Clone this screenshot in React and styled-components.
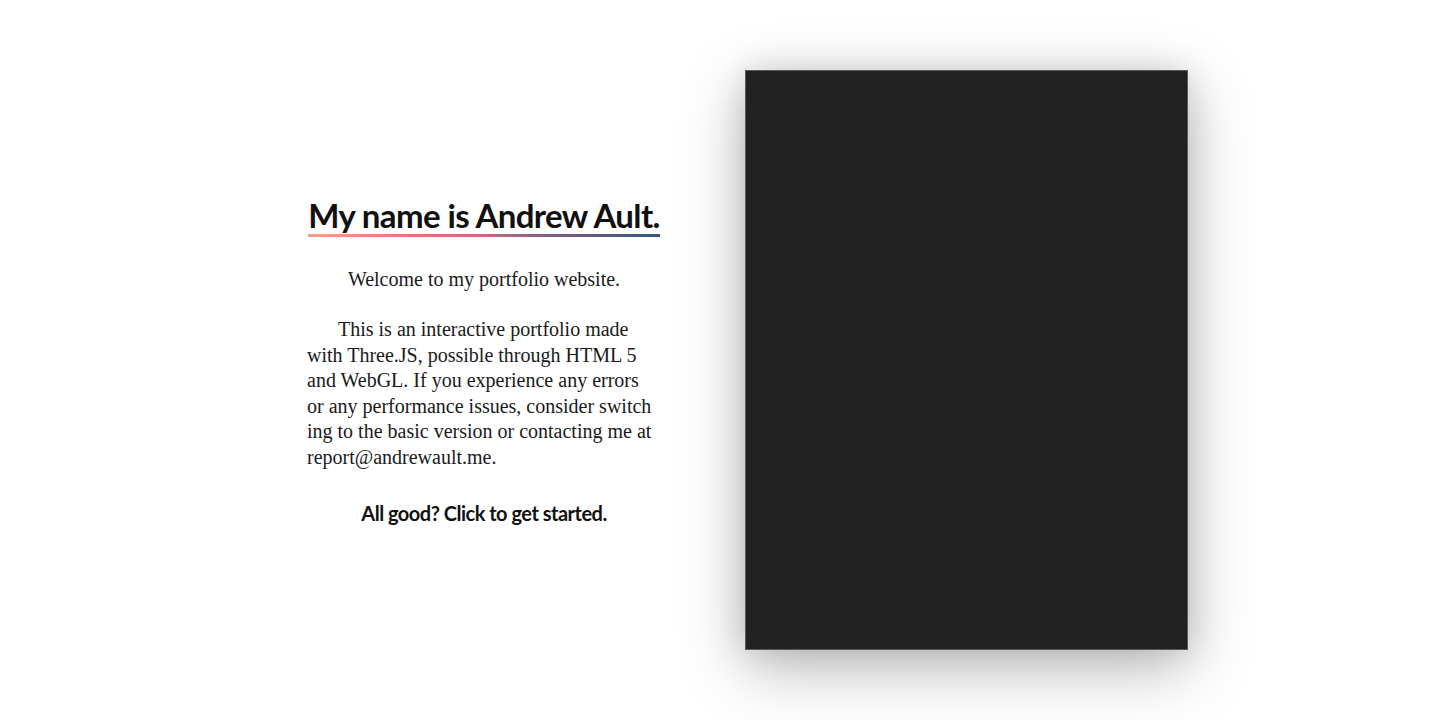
import React from "react";
import styled, { createGlobalStyle } from "styled-components";

const Global = createGlobalStyle`
  html, body {
    margin: 0;
    padding: 0;
    background: #ffffff;
  }
`;

const Page = styled.main`
  display: flex;
  align-items: center;
  height: 720px;
  padding-left: 307px;
  gap: 84px;
  box-sizing: border-box;
`;

const Intro = styled.section`
  width: 354px;
  display: flex;
  flex-direction: column;
  align-items: center;
  color: #111;
`;

const Title = styled.h1`
  margin: 0;
  font-family: "Lato", "Open Sans", sans-serif;
  font-weight: 700;
  font-size: 33px;
  letter-spacing: -0.6px;
  line-height: 40px;
  white-space: nowrap;
  padding-bottom: 2px;
  background-image: linear-gradient(90deg, #f2a584 0%, #e8707c 30%, #c86a80 50%, #7a5a80 72%, #2f5a85 100%);
  background-repeat: no-repeat;
  background-size: 100% 3px;
  background-position: 0 100%;
`;

const Body = styled.div`
  margin-top: 30px;
  width: 100%;
  font-family: "Liberation Serif", "DejaVu Serif", serif;
  font-size: 20px;
  line-height: 25.5px;
  color: #1a1a1a;
`;

const Para = styled.p`
  margin: 0 0 25px;
  text-align: ${(p) => (p.$center ? "center" : "left")};
  text-indent: ${(p) => (p.$indent ? "31px" : "0")};
  white-space: ${(p) => (p.$lines ? "pre-line" : "normal")};
`;

const Start = styled.button`
  margin-top: 6px;
  border: 0;
  background: none;
  padding: 0;
  cursor: pointer;
  font-family: "Lato", "Open Sans", sans-serif;
  font-weight: 700;
  font-size: 20px;
  letter-spacing: -0.5px;
  color: #111;
`;

const Stage = styled.div`
  width: 443px;
  height: 580px;
  background: #212121;
  border: 1px solid #5a5a5a;
  box-sizing: border-box;
  box-shadow: 0 18px 60px rgba(0, 0, 0, 0.28), 0 0 30px rgba(0, 0, 0, 0.12);
`;

export default function App() {
  return (
    <>
      <Global />
      <Page>
        <Intro>
          <Title>My name is Andrew Ault.</Title>
          <Body>
            <Para $center>Welcome to my portfolio website.</Para>
            <Para $indent $lines>
              {`This is an interactive portfolio made
with Three.JS, possible through HTML 5
and WebGL. If you experience any errors
or any performance issues, consider switch
ing to the basic version or contacting me at
report@andrewault.me.`}
            </Para>
          </Body>
          <Start>All good? Click to get started.</Start>
        </Intro>
        <Stage />
      </Page>
    </>
  );
}
